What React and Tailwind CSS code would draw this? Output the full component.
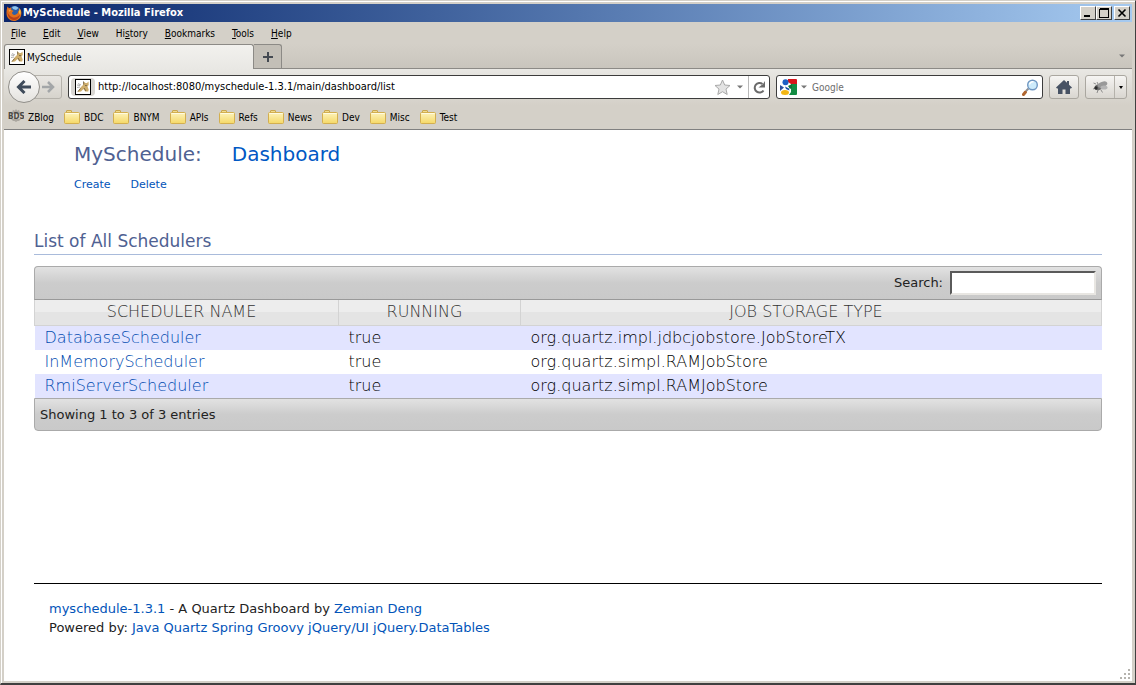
import React from "react";

const menus = [
  ["", "F", "ile"],
  ["", "E", "dit"],
  ["", "V", "iew"],
  ["Hi", "s", "tory"],
  ["", "B", "ookmarks"],
  ["", "T", "ools"],
  ["", "H", "elp"],
];

const folders = ["BDC", "BNYM", "APIs", "Refs", "News", "Dev", "Misc", "Test"];

const schedulers = [
  ["DatabaseScheduler", "true", "org.quartz.impl.jdbcjobstore.JobStoreTX"],
  ["InMemoryScheduler", "true", "org.quartz.simpl.RAMJobStore"],
  ["RmiServerScheduler", "true", "org.quartz.simpl.RAMJobStore"],
];

const powered = ["Java", "Quartz", "Spring", "Groovy", "jQuery/UI", "jQuery.DataTables"];

function FirefoxIcon() {
  return (
    <svg width="16" height="16" viewBox="0 0 16 16" aria-hidden="true">
      <circle cx="8.5" cy="7.5" r="6.5" fill="#2f5fa8" />
      <path d="M6 2c2-1.200 5-.8 6.500 1L10 5 7 4z" fill="#8fc4ec" />
      <path d="M1.500 1.500L3 3.200 5.500 2.500 5 4.500 7.500 6 6 7.500c0 2 2 3 4 2 1.500-.7 2.500-2 2-4l1.500 1c.2-1.500-.2-3-1-4 2.500 1.500 3.500 4.500 2.700 7.500C14.500 13.500 11.500 16 8 16 4 16 1 13 .6 9.500.3 6.500.8 4 1.500 1.500z" fill="#e2701c" />
      <path d="M1.500 6c.5 4 3.500 6.500 7 6.500 2.500 0 4.500-1.500 5.500-3.500-.5 4-3 6-6.200 6C4 15 1.300 11.500 1.500 6z" fill="#b8401a" />
      <path d="M13.500 3.500c1.500 2 1.500 4.500.5 6.500l-1-3z" fill="#f8c84a" />
      <path d="M2.500 4.500l2.500.5-1.500 2z" fill="#f3a54a" />
    </svg>
  );
}

function TomcatIcon() {
  return (
    <svg width="16" height="16" viewBox="0 0 16 16" aria-hidden="true">
      <rect x=".5" y=".5" width="15" height="15" fill="#fff" stroke="#000" />
      <path d="M2 6l3 .5M2 8.500l3-.5M3 4.500L6 6" stroke="#9a9a9a" strokeWidth=".8" />
      <path d="M8.500 2.500l2 1.500h1.500l1.500-1.500.2 3.500-1.200 1.500 1.200 3-.5 2h-3L8.500 10 6 12.500 2.500 13l1-1.500L6 8l2-2z" fill="#cfae6c" />
      <path d="M8.500 2.500l.3 3M5.500 9.500L3 12.500M9 9l2 3M10 6.500l2 .2" stroke="#756345" strokeWidth=".9" fill="none" />
    </svg>
  );
}

function FolderIcon() {
  return (
    <svg width="16" height="16" viewBox="0 0 16 16" aria-hidden="true">
      <defs>
        <linearGradient id="folderFill" x1="0" y1="0" x2="0" y2="1">
          <stop offset="0" stopColor="#fdf3bd" />
          <stop offset="1" stopColor="#f5d866" />
        </linearGradient>
      </defs>
      <path d="M2.500 4V2q0-.5.500-.5h4q.5 0 .5.500v2" fill="#f1dc8b" stroke="#c9a650" />
      <rect x=".5" y="3.500" width="15" height="11" rx="1" fill="url(#folderFill)" stroke="#d3af50" />
      <path d="M1.500 4.500h13" stroke="#fffbe0" />
    </svg>
  );
}

function Bookmark({ label, icon }) {
  return (
    <a href="#bookmark" className="flex items-center gap-1">
      {icon}
      <span>{label}</span>
    </a>
  );
}

function BdsIcon() {
  return (
    <svg width="16" height="16" viewBox="0 0 16 16" aria-hidden="true">
      <path d="M8 0l1.200 1.700 2-.9.300 2 2.200.2-.8 2H3.100l-.8-2 2.200-.2.300-2 2 .9zM3 10h10l-2 2H9.500L8 13l-1.500-1H5z" fill="#aaa69f" />
      <text x="0" y="10" fontSize="8" fontWeight="700" fontFamily="DejaVu Sans Condensed, sans-serif" fill="#4a4845">BDS</text>
    </svg>
  );
}

function DownArrow() {
  return (
    <svg width="6" height="4" viewBox="0 0 6 4" aria-hidden="true" className="text-[#777]">
      <path d="M0 .5h6L3 3.500z" fill="currentColor" />
    </svg>
  );
}

function CaptionButton({ label, children }) {
  return (
    <button
      aria-label={label}
      className="flex h-[14px] w-4 items-center justify-center border border-t-white border-l-white border-r-[#404040] border-b-[#404040] bg-[#d4d0c8]"
    >
      <svg width="10" height="10" viewBox="0 0 10 10" fill="none" stroke="#000" shapeRendering="crispEdges" aria-hidden="true">
        {children}
      </svg>
    </button>
  );
}

function TitleBar() {
  return (
    <div className="flex h-[18px] items-center bg-linear-to-r from-[#0a246a] to-[#a6caf0] pl-0.5 pr-0.5 text-white">
      <FirefoxIcon />
      <span className="flex-1 pl-px text-[11px] font-bold">MySchedule - Mozilla Firefox</span>
      <div className="flex">
        <CaptionButton label="Minimize">
          <path d="M1 8h6" strokeWidth="2" />
        </CaptionButton>
        <CaptionButton label="Maximize">
          <path d="M.5 1h9" strokeWidth="2" />
          <path d="M.5 1v8h8.500V1" />
        </CaptionButton>
        <span className="w-0.5" />
        <CaptionButton label="Close">
          <path d="M1.500 1.500l7 7M8.500 1.500l-7 7" strokeWidth="1.600" shapeRendering="auto" />
        </CaptionButton>
      </div>
    </div>
  );
}

function NavBar() {
  return (
    <div className="flex h-9 items-center bg-linear-to-b from-[#e9e8e4] to-[#d4d0c8] pl-1 pr-[5px]">
      <div className="flex items-center">
        <button
          aria-label="Back"
          className="z-10 flex size-8 items-center justify-center rounded-full border border-[#918f8a] bg-linear-to-b from-white to-[#e4e2de]"
        >
          <svg width="16" height="14" viewBox="0 0 16 14" fill="none" stroke="#3f4b5a" strokeWidth="3" aria-hidden="true">
            <path d="M8.500 1L2.500 7l6 6M2.500 7H15" />
          </svg>
        </button>
        <button
          aria-label="Forward"
          className="-ml-2 flex h-6 w-[30px] items-center justify-end rounded-r-[3px] border border-[#b5b2ab] bg-linear-to-b from-[#e9e7e3] to-[#d6d3cc] pr-1.5"
        >
          <svg width="13" height="12" viewBox="0 0 13 12" fill="none" stroke="#a3a6a8" strokeWidth="2.500" aria-hidden="true">
            <path d="M6 1l5 5-5 5M11 6H0" />
          </svg>
        </button>
      </div>
      <div className="ml-1.5 flex h-6 flex-1 items-center rounded-[3px] border border-[#3c3c3c] bg-white">
        <span className="ml-0.5 flex h-[18px] w-6 items-center justify-center rounded-sm bg-[#d9d7d3]">
          <TomcatIcon />
        </span>
        <input
          aria-label="Location"
          defaultValue="http://localhost:8080/myschedule-1.3.1/main/dashboard/list"
          className="min-w-0 flex-1 bg-transparent pl-[3px] text-[11px] outline-none"
        />
        <button aria-label="Bookmark this page">
          <svg width="17" height="17" viewBox="0 0 17 17" aria-hidden="true">
            <path d="M8.500 1l2.200 5 5.300.500-4 3.600 1.200 5.400-4.700-2.800-4.700 2.800L5 10.100 1 6.500 6.300 6z" fill="#e3e3e3" stroke="#a9a9a9" />
          </svg>
        </button>
        <button aria-label="Show history" className="pr-[5px] pl-1.5">
          <DownArrow />
        </button>
        <button aria-label="Reload" className="flex h-full w-[21px] items-center justify-center border-l border-[#b9b9b9]">
          <svg width="13" height="13" viewBox="0 0 13 13" fill="none" stroke="#6b6b6b" strokeWidth="2" aria-hidden="true">
            <path d="M10.500 9.500A4.800 4.800 0 1 1 9.500 3" />
            <path d="M12 0v6.500H5.500l2.500-2 2-1.500z" fill="#6b6b6b" stroke="none" />
          </svg>
        </button>
      </div>
      <div className="ml-1.5 flex h-6 w-[267px] items-center rounded-[3px] border border-[#3c3c3c] bg-white px-[3px]">
        <button aria-label="Choose search engine" className="flex items-center gap-1">
          <svg width="17" height="16" viewBox="0 0 17 16" aria-hidden="true">
            <path d="M8 0h8q1 0 1 1v4h-6L8 3z" fill="#d8151b" />
            <path d="M11 5h6v10q0 1-1 1H9l2-3z" fill="#128c43" />
            <path d="M8 7l4-2v4l-2 1z" fill="#0c7438" />
            <circle cx="5.500" cy="3.200" r="3" fill="#1d5fc4" />
            <path d="M0 6l4 2.500L0 12z" fill="#2c4f9e" />
            <path d="M5 7.500l4 2 .5 2L6 10z" fill="#174ea6" />
            <ellipse cx="5" cy="13.500" rx="4" ry="2.500" fill="#f2b614" />
          </svg>
          <DownArrow />
        </button>
        <input
          aria-label="Search the web"
          placeholder="Google"
          className="min-w-0 flex-1 bg-transparent pl-[5px] text-[10px] outline-none placeholder:text-[#6d6d6d]"
        />
        <button aria-label="Search">
          <svg width="17" height="17" viewBox="0 0 17 17" fill="none" aria-hidden="true">
            <path d="M1.500 15.500l2-2.500" stroke="#b0662f" strokeWidth="3" strokeLinecap="round" />
            <path d="M4 12l2.500-2.500" stroke="#8d9096" strokeWidth="2" />
            <circle cx="10.500" cy="6" r="4.800" fill="#cdebfb" stroke="#6f97c2" strokeWidth="1.400" />
            <path d="M7.500 5.500a3 3 0 0 1 4-2.500" stroke="#fff" strokeWidth="1.500" />
          </svg>
        </button>
      </div>
      <button
        aria-label="Home"
        className="ml-1.5 flex h-6 w-[30px] items-center justify-center rounded-[3px] border border-[#aaa7a0] bg-linear-to-b from-[#f6f5f3] to-[#d9d6d0]"
      >
        <svg width="16" height="14" viewBox="0 0 16 14" aria-hidden="true">
          <path d="M8 0l3 2.800V1h2v3.700L16 7.500 15 8.500h-1V14H9.500V9.500h-3V14H2V8.500H1L0 7.500z" fill="#475264" />
        </svg>
      </button>
      <div className="ml-1.5 flex h-6 w-[42px] rounded-[3px] border border-[#aaa7a0] bg-linear-to-b from-[#f6f5f3] to-[#d9d6d0]">
        <button aria-label="Firebug" className="flex flex-1 items-center justify-center">
          <svg width="16" height="16" viewBox="0 0 16 16" aria-hidden="true">
            <path d="M4 5L1.500 4M4 9L1 10M6 11l-1 3M9 11l1.500 2.500M6 5L5 3" stroke="#777" strokeWidth=".8" />
            <ellipse cx="7" cy="8" rx="4.500" ry="3" transform="rotate(-20 7 8)" fill="#6f6f6f" />
            <ellipse cx="10.500" cy="5.500" rx="5" ry="2.700" transform="rotate(-20 10.500 5.500)" fill="#999" />
            <ellipse cx="12" cy="8.500" rx="3.500" ry="2" fill="#b5b5b5" />
            <circle cx="4" cy="9" r="1.700" fill="#2e2e2e" />
          </svg>
        </button>
        <button aria-label="Firebug options" className="flex w-3 items-center justify-center border-l border-[#b5b2ab]">
          <svg width="4" height="3" viewBox="0 0 4 3" aria-hidden="true">
            <path d="M0 0h4L2 3z" />
          </svg>
        </button>
      </div>
    </div>
  );
}

function Browser({ children }) {
  return (
    <div className="flex min-h-screen flex-col border-t border-l border-r border-b-2 border-t-[#d4d0c8] border-l-[#d4d0c8] border-r-[#404040] border-b-[#404040] bg-[#d4d0c8] font-['DejaVu_Sans_Condensed','DejaVu_Sans',sans-serif] text-[10px] text-black">
      <div className="flex flex-1 flex-col border-t border-l border-white pt-0.5 pr-[3px] pb-0.5 pl-0.5">
        <TitleBar />
        <div className="flex h-[22px] items-center gap-[17px] pl-[7px]">
          {menus.map(([before, key, after]) => (
            <button key={before + key + after}>
              {before}
              <u>{key}</u>
              {after}
            </button>
          ))}
        </div>
        <div className="flex h-[25px] items-end border-b border-[#8c8a86] bg-linear-to-b from-[#d4d0c8] to-[#c9c5bd]">
          <button className="-mb-px flex h-[25px] w-[250px] items-center gap-0.5 rounded-t-[3px] border border-b-0 border-[#8c8a86] bg-linear-to-b from-[#f2f1ee] to-[#e9e8e4] pl-1">
            <TomcatIcon />
            MySchedule
          </button>
          <button
            aria-label="Open a new tab"
            className="flex h-6 w-7 items-center justify-center rounded-tr-[3px] border border-b-0 border-l-0 border-[#8c8a86] bg-[#c3bfb7]"
          >
            <svg width="10" height="10" viewBox="0 0 10 10" stroke="#444a52" strokeWidth="2" aria-hidden="true">
              <path d="M5 0v10M0 5h10" />
            </svg>
          </button>
          <button aria-label="List all tabs" className="mr-[7px] ml-auto self-center">
            <DownArrow />
          </button>
        </div>
        <NavBar />
        <div className="flex h-[25px] items-center gap-2.5 border-b border-[#808080] pl-1">
          <Bookmark label="ZBlog" icon={<BdsIcon />} />
          {folders.map((name) => (
            <Bookmark key={name} label={name} icon={<FolderIcon />} />
          ))}
        </div>
        <div className="flex flex-1 flex-col bg-white">{children}</div>
      </div>
    </div>
  );
}

const barFill = "border-[#aaaaaa] bg-linear-to-b from-[#e2e2e2] via-[#cccccc] to-[#c9c9c9]";
const headCell =
  "h-[25px] border-b border-[#d3d3d3] bg-linear-to-b from-[#ededed] from-50% to-[#e4e4e4] to-50% py-0 pr-2.5 pl-0 font-normal text-[#333333]";

function SchedulerTable() {
  return (
    <section className="mt-[11px]">
      <div className={`flex h-[34px] items-center justify-end rounded-t border border-b-[#999] pr-[5px] text-[13px] ${barFill}`}>
        <label htmlFor="filter" className="pr-[7px]">
          Search:
        </label>
        <input
          id="filter"
          className="h-6 w-[146px] border-2 border-t-[#5a5a5a] border-l-[#5a5a5a] border-r-[#e8e6e2] border-b-[#e8e6e2] bg-white px-1 outline-none"
        />
      </div>
      <table className="w-full table-fixed border-collapse font-['DejaVu_Sans_Light','DejaVu_Sans',sans-serif] text-[16px] leading-6 font-extralight text-black">
        <thead>
          <tr>
            <th className={`w-[304px] border-r border-l ${headCell}`}>SCHEDULER NAME</th>
            <th className={`w-[182px] border-r ${headCell}`}>RUNNING</th>
            <th className={`border-r ${headCell}`}>JOB STORAGE TYPE</th>
          </tr>
        </thead>
        <tbody>
          {schedulers.map(([name, running, store]) => (
            <tr key={name} className="odd:bg-[#e2e4ff]">
              <td className="py-0 pl-2.5">
                <a href="#scheduler" className="text-[#004bb0]">
                  {name}
                </a>
              </td>
              <td className="py-0 pl-2.5">{running}</td>
              <td className="py-0 pl-2.5">{store}</td>
            </tr>
          ))}
        </tbody>
      </table>
      <div className={`flex h-[33px] items-center rounded-b border px-[5px] pt-0.5 text-[13px] ${barFill}`}>
        Showing 1 to 3 of 3 entries
      </div>
    </section>
  );
}

export default function App() {
  return (
    <Browser>
      <main className="flex-1 px-[30px] font-['DejaVu_Sans',sans-serif] text-[13px] text-[#222222]">
        <header className="pl-10">
          <h1 className="flex gap-[30px] pt-3 text-[20px] leading-6 text-[#4f6192]">
            <span>MySchedule:</span>
            <a href="#dashboard" className="text-[#0058c4]">
              Dashboard
            </a>
          </h1>
          <nav className="flex gap-5 pt-[11px] text-[11px] leading-4 text-[#0254b9]">
            <a href="#create">Create</a>
            <a href="#delete">Delete</a>
          </nav>
        </header>
        <h2 className="mt-9 border-b border-[#a9bbdb] pb-px text-[17px] leading-6 text-[#4f6192]">
          List of All Schedulers
        </h2>
        <SchedulerTable />
        <footer className="mt-[152px] border-t border-black px-[15px] pt-[15px] leading-[19px]">
          <p>
            <a href="#home" className="text-[#0254b9]">
              myschedule-1.3.1
            </a>{" "}
            - A Quartz Dashboard by{" "}
            <a href="#author" className="text-[#0254b9]">
              Zemian Deng
            </a>
          </p>
          <p>
            Powered by:{" "}
            {powered.map((name) => (
              <React.Fragment key={name}>
                <a href="#powered" className="text-[#0254b9]">
                  {name}
                </a>{" "}
              </React.Fragment>
            ))}
          </p>
        </footer>
      </main>
      <svg width="12" height="12" viewBox="0 0 12 12" fill="#b5b3ae" aria-hidden="true" className="self-end">
        <path d="M8 0h2v2H8zM4 4h2v2H4zM8 4h2v2H8zM0 8h2v2H0zM4 8h2v2H4zM8 8h2v2H8z" />
      </svg>
    </Browser>
  );
}
